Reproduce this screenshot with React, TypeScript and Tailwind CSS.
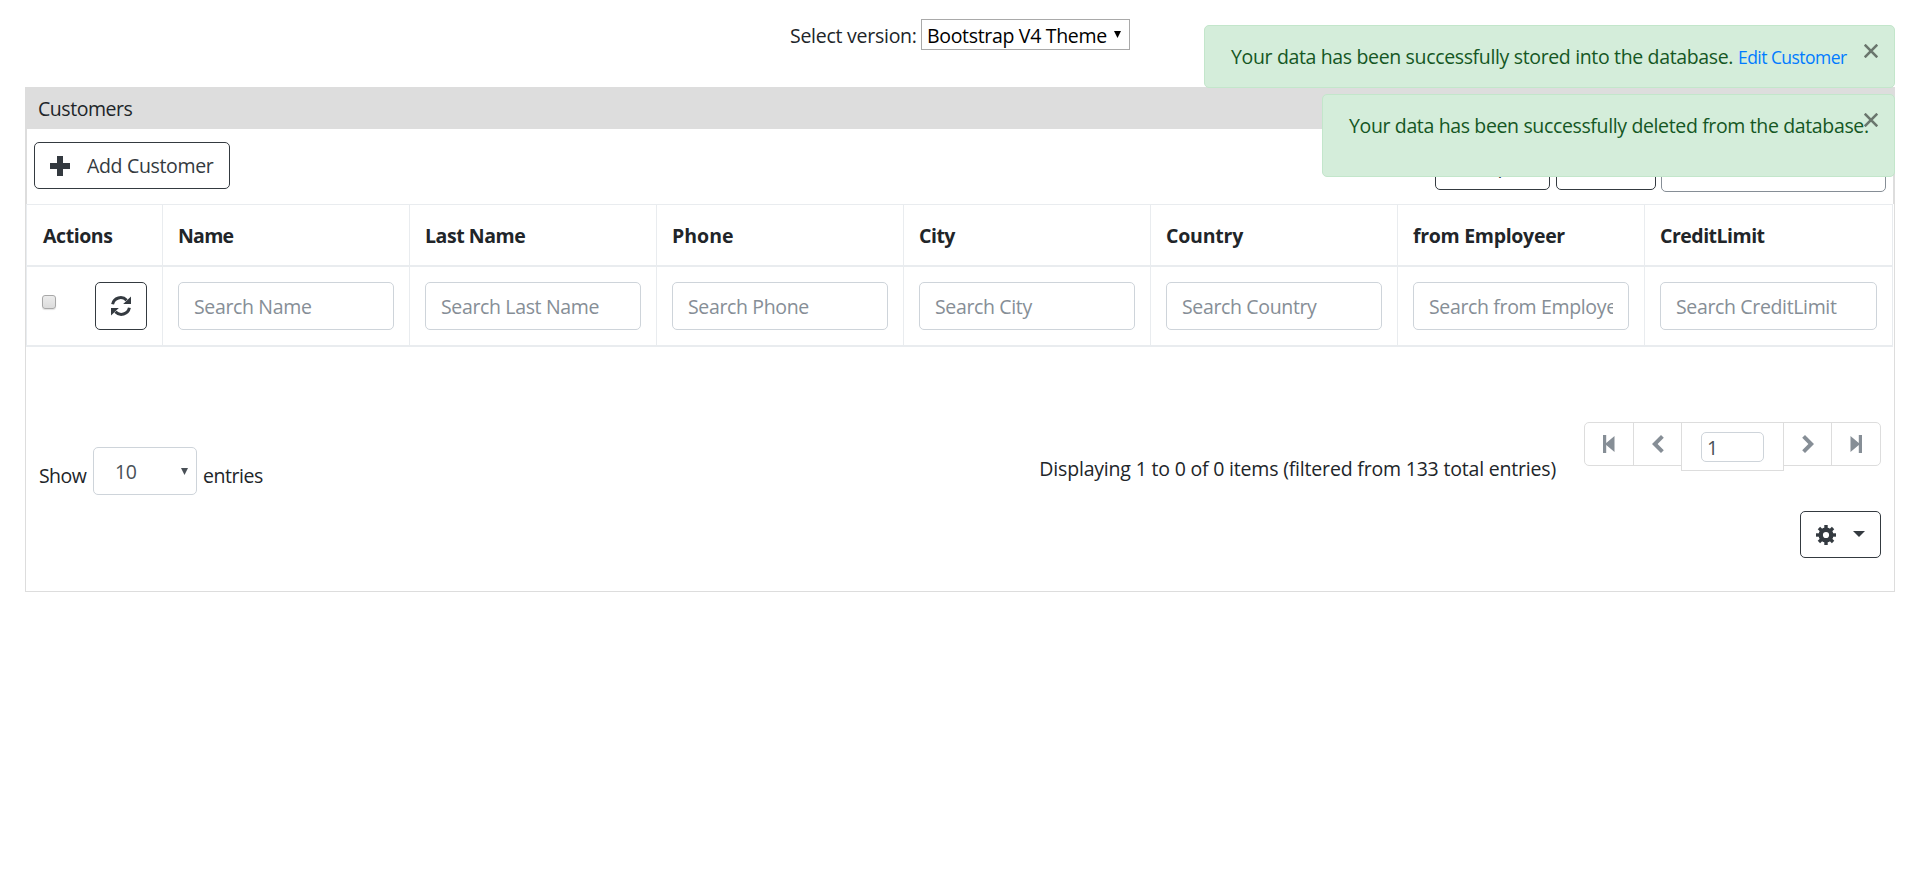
import type { ReactNode } from "react";

const BODY = "text-[19.5px] leading-[30px]";

function Refresh() {
  return (
    <svg width="20" height="20" viewBox="0 0 20 20" fill="none" className="text-[#343a40]">
      <path d="M1.6 8.2A8.2 8.2 0 0 1 15.6 4.2" stroke="currentColor" strokeWidth="3" />
      <path d="M20 0.4V8h-7.8z" fill="currentColor" />
      <path d="M18.4 11.8A8.2 8.2 0 0 1 4.4 15.8" stroke="currentColor" strokeWidth="3" />
      <path d="M0 19.6V12h7.8z" fill="currentColor" />
    </svg>
  );
}

function Gear() {
  const teeth = [0, 45, 90, 135, 180, 225, 270, 315];
  return (
    <svg width="20" height="20" viewBox="0 0 20 20" className="text-[#343a40]">
      {teeth.map((a) => (
        <rect key={a} x="8.3" y="0" width="3.4" height="5" fill="currentColor" transform={`rotate(${a} 10 10)`} />
      ))}
      <circle cx="10" cy="10" r="5.3" fill="none" stroke="currentColor" strokeWidth="4.4" />
    </svg>
  );
}

function Cross() {
  return (
    <button className="absolute right-[16px] top-[18px]" aria-label="Close">
      <svg width="14" height="14" viewBox="0 0 14 14" className="text-[#6a766d]">
        <path d="M0.7 0.7l12.6 12.6M13.3 0.7L0.7 13.3" stroke="currentColor" strokeWidth="2.6" />
      </svg>
    </button>
  );
}

function PageCell({ className, children }: { className: string; children: ReactNode }) {
  return <div className={`flex justify-center border border-[#ddd] text-[#868e96] ${className}`}>{children}</div>;
}

const columns = [
  { name: "Name", head: "tracking-[-0.75px]", width: "w-[247px]" },
  { name: "Last Name", head: "tracking-[-0.45px]", width: "w-[247px]" },
  { name: "Phone", head: "tracking-normal", width: "w-[247px]" },
  { name: "City", head: "tracking-[-0.5px]", width: "w-[247px]" },
  { name: "Country", head: "tracking-[-0.2px]", width: "w-[247px]" },
  { name: "from Employeer", head: "tracking-[-0.3px]", width: "w-[247px]" },
  { name: "CreditLimit", head: "tracking-[-0.5px]", width: "w-[248px]" },
];

export default function App() {
  return (
    <div className={`relative h-[888px] overflow-hidden bg-white pl-[25px] pr-[25px] font-['Open_Sans','Noto_Sans',sans-serif] text-[#212529] ${BODY}`}>
      <div className="flex h-[87px] items-start pl-[765px] pt-[19px]">
        <span className="mt-[2px] w-[131px] whitespace-nowrap tracking-[-0.26px]">Select version:</span>
        <div className="flex h-[31px] w-[209px] border border-[#a9a9a9] pl-[5px] text-black">
          <span className="mt-px w-[187px] whitespace-nowrap tracking-[-0.32px]">Bootstrap V4 Theme</span>
          <svg width="7" height="7" viewBox="0 0 7 7" className="mt-[11px]">
            <path d="M0 0h7L3.5 7z" fill="#000" />
          </svg>
        </div>
      </div>

      <div className="h-[505px] border border-[#ddd]">
        <div className="-mt-px h-[42px] bg-[#ddd] pl-[12px] pt-[7px] tracking-[-0.46px]">Customers</div>

        <div className="flex h-[75px] justify-between border-x border-[#ddd] pl-[7px] pr-[7px] pt-[13px]">
          <button className="flex h-[47px] w-[196px] items-center rounded-[5px] border border-[#343a40] pl-[15px] text-[#343a40]">
            <svg width="20" height="20" viewBox="0 0 20 20">
              <path d="M7 0h6v7h7v6h-7v7H7v-7H0V7h7z" fill="currentColor" />
            </svg>
            <span className="ml-[17px] mt-px whitespace-nowrap tracking-[-0.33px]">Add Customer</span>
          </button>
          <div className="flex">
            <button className="mr-[6px] flex h-[48px] w-[115px] items-center rounded-[5px] border border-[#343a40] pl-[15px] tracking-[-0.3px] text-[#343a40]">
              <svg width="20" height="20" viewBox="0 0 20 20" fill="none" stroke="currentColor" strokeWidth="2.5">
                <path d="M9 4H2v14h14v-6M8 12L18 2M12 2h6v6" />
              </svg>
              <span className="ml-[6px]">Export</span>
            </button>
            <button className="mr-[5px] h-[48px] w-[100px] rounded-[5px] border border-[#343a40] tracking-[-0.3px] text-[#343a40]">Print</button>
            <div className="h-[50px] w-[225px] rounded-[5px] border border-[#868e96]" />
          </div>
        </div>

        <div className="flex h-[143px] w-[1867px] border-l border-t border-[#e9ecef]">
          <div className="w-[136px] shrink-0 border-r border-[#e9ecef]">
            <div className="h-[62px] border-b-2 border-[#e9ecef] pl-[16px] pt-[16px] font-bold tracking-[-0.42px]">Actions</div>
            <div className="flex h-[80px] justify-between border-b-2 border-[#e9ecef] pl-[15px] pr-[15px] pt-[15px]">
              <span className="mt-[13px] h-[14px] w-[14px] rounded-[3px] border border-[#a8a8a8] bg-linear-to-b from-[#ececec] to-[#dcdcdc] shadow-[0_1px_1px_rgba(0,0,0,0.12)]" />
              <button className="flex h-[48px] w-[52px] items-center justify-center rounded-[5px] border border-[#343a40]">
                <Refresh />
              </button>
            </div>
          </div>
          {columns.map((c) => (
            <div key={c.name} className={`shrink-0 border-r border-[#e9ecef] ${c.width}`}>
              <div className={`h-[62px] border-b-2 border-[#e9ecef] pl-[15px] pt-[16px] font-bold ${c.head}`}>{c.name}</div>
              <div className="h-[80px] border-b-2 border-[#e9ecef] pl-[15px] pr-[15px] pt-[15px]">
                <input
                  className="block h-[48px] w-full rounded-[5px] border border-[#ced4da] px-[15px] pt-px tracking-[-0.35px] placeholder:text-[#868e96]"
                  placeholder={`Search ${c.name}`}
                />
              </div>
            </div>
          ))}
        </div>

        <div className="flex justify-between pr-[13px] pt-[75px]">
          <div className="flex pl-[13px] pt-[25px]">
            <span className="mt-[14px] w-[54px] tracking-[-0.58px]">Show</span>
            <div className="flex h-[48px] w-[104px] rounded-[5px] border border-[#ced4da] pl-[21px] pt-[9px] text-[#495057]">
              <span className="w-[66px] tracking-[-0.5px]">10</span>
              <svg width="7" height="7" viewBox="0 0 7 7" className="mt-[11px]">
                <path d="M0 0h7L3.5 7z" fill="currentColor" />
              </svg>
            </div>
            <span className="ml-[6px] mt-[14px] tracking-[-0.47px]">entries</span>
          </div>
          <div className="flex">
            <span className="mr-[28px] mt-[32px] whitespace-nowrap tracking-[-0.19px]">
              Displaying 1 to 0 of 0 items (filtered from 133 total entries)
            </span>
            <div className="flex items-start">
              <PageCell className="h-[44px] w-[50px] rounded-l-[5px] pt-[12px]">
                <svg width="12" height="18" viewBox="0 0 12 18">
                  <path d="M0 0h3.2v8L11.5 0.9v16.2L3.2 10v8H0z" fill="currentColor" />
                </svg>
              </PageCell>
              <PageCell className="-ml-px h-[44px] w-[49px] pt-[12px]">
                <svg width="12" height="18" viewBox="0 0 12 18">
                  <path d="M9 0l2.8 2.8L5.6 9l6.2 6.2L9 18 0 9z" fill="currentColor" />
                </svg>
              </PageCell>
              <PageCell className="-ml-px h-[49px] w-[103px] pt-[9px]">
                <div className="h-[30px] w-[63px] rounded-[5px] border border-[#ced4da] pl-[5px] text-[#495057]">1</div>
              </PageCell>
              <PageCell className="-ml-px h-[44px] w-[49px] pt-[12px]">
                <svg width="12" height="18" viewBox="0 0 12 18">
                  <path d="M3 0L0.2 2.8 6.4 9l-6.2 6.2L3 18l9-9z" fill="currentColor" />
                </svg>
              </PageCell>
              <PageCell className="-ml-px h-[44px] w-[50px] rounded-r-[5px] pt-[12px]">
                <svg width="12" height="18" viewBox="0 0 12 18">
                  <path d="M12 0H8.8v8L0.5 0.9v16.2L8.8 10v8H12z" fill="currentColor" />
                </svg>
              </PageCell>
            </div>
          </div>
        </div>

        <div className="flex justify-end pr-[13px] pt-[16px]">
          <button className="flex h-[47px] w-[81px] items-center rounded-[5px] border border-[#343a40] pl-[15px]">
            <Gear />
            <svg width="12" height="6" viewBox="0 0 12 6" className="-mt-[2px] ml-[17px]">
              <path d="M0 0h12L6 6z" fill="#343a40" />
            </svg>
          </button>
        </div>
      </div>

      <div className="absolute left-[1204px] top-[25px] h-[63px] w-[691px] rounded-[5px] border border-[#c3e6cb] bg-[#d4edda] pl-[26px] pt-[16px] text-[#155724]">
        <span className="whitespace-nowrap tracking-[-0.35px]">Your data has been successfully stored into the database.</span>
        <a className="absolute left-[533px] top-[16px] whitespace-nowrap text-[17.5px] tracking-[-0.55px] text-[#007bff]">Edit Customer</a>
        <Cross />
      </div>
      <div className="absolute left-[1322px] top-[94px] h-[83px] w-[573px] rounded-[5px] border border-[#c3e6cb] bg-[#d4edda] pl-[26px] pt-[16px] text-[#155724]">
        <span className="whitespace-nowrap tracking-[-0.36px]">Your data has been successfully deleted from the database.</span>
        <Cross />
      </div>
    </div>
  );
}
